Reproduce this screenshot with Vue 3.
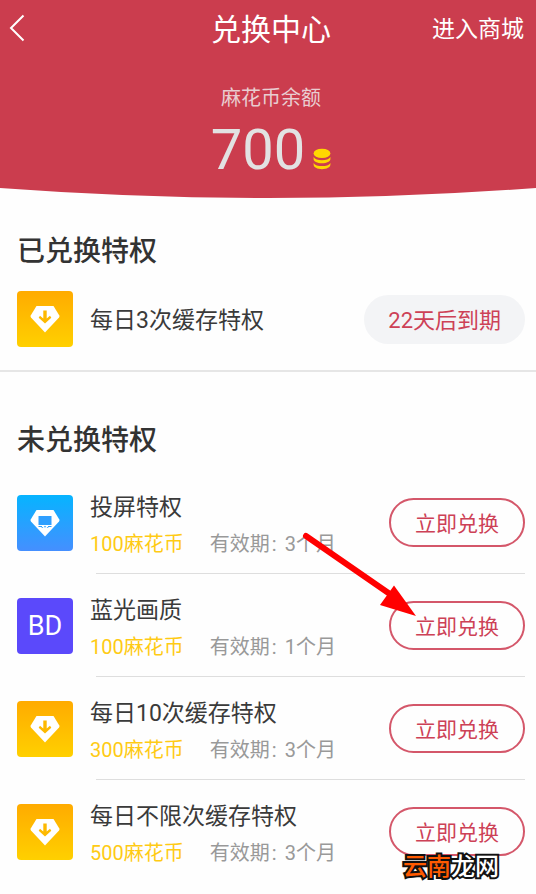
<script setup>
const privileges = [
  { id: 'cast', icon: 'cast', name: '投屏特权', price: 100, months: 3 },
  { id: 'bluray', icon: 'bd', name: '蓝光画质', price: 100, months: 1 },
  { id: 'cache10', icon: 'cache', name: '每日10次缓存特权', price: 300, months: 3 },
  { id: 'cacheall', icon: 'cache', name: '每日不限次缓存特权', price: 500, months: 3 },
]
</script>

<template>
  <div class="page">
    <header class="hero">
      <div class="bar">
        <button class="back" type="button" aria-label="返回">
          <svg width="16" height="28" viewBox="0 0 16 28" aria-hidden="true">
            <path d="M14.5 1.5L2 14L14.5 26.5" fill="none" stroke="#fff" stroke-width="2" />
          </svg>
        </button>
        <h1>兑换中心</h1>
        <a class="mall" href="#mall">进入商城</a>
      </div>
      <p class="label">麻花币余额</p>
      <p class="balance">
        <span>700</span>
        <svg class="coins" width="18" height="22" viewBox="0 0 18 22" aria-hidden="true">
          <g fill="#ffd800">
            <ellipse cx="9" cy="5.4" rx="8.4" ry="4.7" />
            <path d="M.6 9C2 11.2 5 12.2 9 12.2S16 11.2 17.4 9V11C17.4 13.6 13.8 15.2 9 15.2S.6 13.6 .6 11Z" />
            <path d="M.6 14.9C2 17.1 5 18.1 9 18.1S16 17.1 17.4 14.9V16.6C17.4 19.4 13.8 21.2 9 21.2S.6 19.4 .6 16.6Z" />
          </g>
        </svg>
      </p>
    </header>
    <svg class="curve" viewBox="0 0 100 10" preserveAspectRatio="none" aria-hidden="true">
      <path d="M0 0Q50 20 100 0Z" fill="#cb3d4e" />
    </svg>

    <main>
      <section class="owned">
        <h2>已兑换特权</h2>
        <div class="row">
          <span class="icon cache">
            <svg width="30" height="28" viewBox="0 0 30 28" aria-hidden="true">
              <path d="M6.5 1H23.5L29.3 10.5Q29.8 11.5 29 12.4L15 27.5L1 12.4Q.2 11.5 .7 10.5Z" fill="#fff" />
              <path d="M13.3 5.5H16.7V13.5L20 10.8L21.3 12.8L15 18.5L8.7 12.8L10 10.8L13.3 13.5Z" fill="#fdb900" />
            </svg>
          </span>
          <p class="name">每日3次缓存特权</p>
          <span class="pill">22天后到期</span>
        </div>
      </section>

      <section class="available">
        <h2>未兑换特权</h2>
        <ul>
          <li v-for="p in privileges" :key="p.id">
            <div class="row">
              <span class="icon" :class="p.icon">
                <template v-if="p.icon === 'bd'">BD</template>
                <svg v-else width="30" height="28" viewBox="0 0 30 28" aria-hidden="true">
                  <path d="M6.5 1H23.5L29.3 10.5Q29.8 11.5 29 12.4L15 27.5L1 12.4Q.2 11.5 .7 10.5Z" fill="#fff" />
                  <path
                    v-if="p.icon === 'cache'"
                    d="M13.3 5.5H16.7V13.5L20 10.8L21.3 12.8L15 18.5L8.7 12.8L10 10.8L13.3 13.5Z"
                    fill="#fdb900"
                  />
                  <g v-else fill="#2f9fff">
                    <path d="M8.5 7H21.5V16H8.5Z" />
                    <path d="M8.5 17H12V18H8.5ZM18 17H21.5V18H18ZM15 16.8L16.4 18.2H13.6ZM11.6 18.2H13V19H11.6ZM17 18.2H18.4V19H17Z" />
                  </g>
                </svg>
              </span>
              <div class="info">
                <h3 class="name">{{ p.name }}</h3>
                <p class="meta">
                  <span class="price">{{ p.price }}麻花币</span>
                  <span class="term">有效期<span class="colon">:</span>{{ p.months }}个月</span>
                </p>
              </div>
              <button class="redeem" type="button">立即兑换</button>
            </div>
          </li>
        </ul>
      </section>
    </main>

    <svg class="pointer" width="120" height="88" viewBox="0 0 120 88" aria-hidden="true">
      <path d="M6 6L100 71" stroke="#f00" stroke-width="6" stroke-linecap="round" />
      <path d="M116 86L94 55.5L80 75Z" fill="#f00" />
    </svg>
    <p class="watermark"><b>云南</b>龙网</p>
  </div>
</template>

<style>
body {
  margin: 0;
  background: #fefefe;
}
</style>

<style scoped>
.page {
  position: relative;
  overflow: hidden;
  font-family: Roboto, "Noto Sans CJK SC", sans-serif;
  color: #3a3a3a;
}

h1,
h2,
h3,
p,
ul {
  margin: 0;
  padding: 0;
  font-weight: 400;
}

ul {
  list-style: none;
}

button {
  padding: 0;
  font-family: inherit;
  background: none;
  border: 0;
}

.hero {
  padding: 0 0 4px 6px;
  color: #fff;
  text-align: center;
  background: #cb3d4e;
}

.bar {
  display: grid;
  grid-template-columns: 1fr auto 1fr;
  align-items: center;
  height: 56px;
  padding: 0 12px;
}

.back {
  display: flex;
  justify-self: start;
  margin-left: -9px;
}

h1 {
  padding-top: 4px;
  font-size: 30px;
  line-height: 52px;
}

.mall {
  justify-self: end;
  padding-top: 4px;
  font-size: 23px;
  line-height: 52px;
  color: #fff;
  text-decoration: none;
}

.label {
  padding-top: 26px;
  font-size: 20px;
  line-height: 32px;
  color: #e9cdd1;
}

.balance {
  display: flex;
  gap: 8px;
  align-items: flex-end;
  justify-content: center;
  padding-top: 2px;
  font-size: 56px;
  line-height: 68px;
  color: #e2e2e2;
}

.coins {
  margin-bottom: 14px;
}

.curve {
  display: block;
  width: 100%;
  height: 10px;
}

h2 {
  padding-top: 6px;
  font-size: 28px;
  font-weight: 500;
  line-height: 34px;
  color: #333;
}

.row {
  display: flex;
  align-items: center;
}

.owned {
  padding: 31px 11px 23px 17px;
  border-bottom: 2px solid #e6e6e6;
}

.owned .row {
  padding-top: 22px;
}

.icon {
  display: flex;
  flex: none;
  align-items: center;
  justify-content: center;
  width: 56px;
  height: 56px;
  margin-right: 17px;
  border-radius: 4px;
}

.cache {
  background: linear-gradient(#ffab00, #ffd000);
}

.cast {
  background: linear-gradient(#06b4ff, #458fff);
}

.bd {
  font-size: 27px;
  color: #fff;
  background: #5b49fb;
}

.name {
  padding-top: 4px;
  font-size: 23px;
  line-height: 32px;
}

.pill,
.redeem {
  box-sizing: border-box;
  flex: none;
  height: 49px;
  padding: 2px 24px 0;
  margin-left: auto;
  color: #cd4156;
  border-radius: 25px;
}

.pill {
  font-size: 22px;
  line-height: 47px;
  background: #f3f4f6;
}

.redeem {
  padding-top: 4px;
  font-size: 21px;
  line-height: 41px;
  border: 2px solid #d4576a;
}

.available {
  padding: 46px 11px 0 17px;
}

.available ul {
  padding-top: 13px;
}

.info {
  padding-top: 4px;
}

li .row {
  height: 102px;
}

li .icon {
  margin-top: 2px;
}

li:not(:last-child)::after {
  display: block;
  height: 1px;
  margin-left: 79px;
  content: "";
  background: #dedede;
}

.meta {
  display: flex;
  gap: 26px;
  padding-top: 3px;
  font-size: 20px;
  line-height: 34px;
}

.price {
  color: #ffcb14;
}

.term {
  display: flex;
  color: #999;
}

.colon {
  box-sizing: border-box;
  width: 15px;
  padding-left: 2px;
}

.pointer {
  position: absolute;
  top: 530px;
  left: 300px;
}

.watermark {
  position: absolute;
  top: 849px;
  right: 37px;
  font-size: 24px;
  font-weight: 500;
  line-height: 36px;
  color: #fff;
  paint-order: stroke fill;
  -webkit-text-stroke: 4px #111;
}

.watermark b {
  font-weight: 500;
  color: #ff5a00;
}
</style>
